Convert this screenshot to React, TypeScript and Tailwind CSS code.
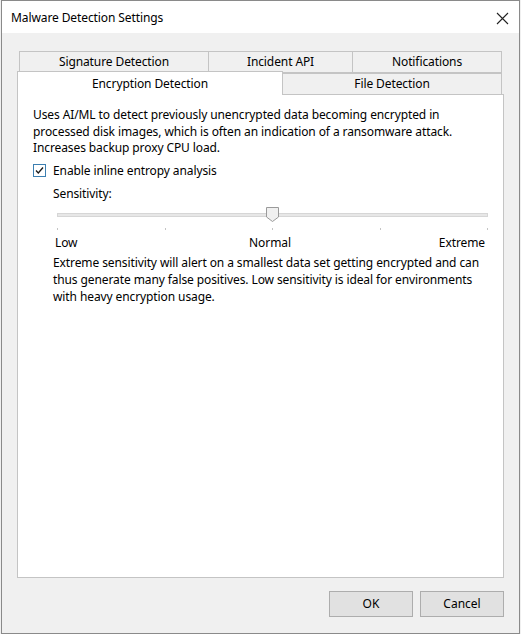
import React from "react"

const font = { fontFamily: '"Noto Sans", "Open Sans", sans-serif' }

function Tab({ label, w, selected }: { label: string; w: string; selected?: boolean }) {
  return (
    <div
      className={`${w} flex items-center justify-center text-[12px] tracking-[-0.1px] text-black border border-[#c4c4c4] ${
        selected ? "bg-white border-b-0 h-[24px] relative z-10" : "bg-[#f0f0f0] h-[22px]"
      }`}
    >
      {label}
    </div>
  )
}

export default function App() {
  const ticks = [0, 1, 2, 3, 4]
  return (
    <div className="w-[521px] h-[634px] bg-[#f0f0f0]" style={font}>
      <div className="w-[519px] h-[634px] ml-[1px] border border-[#8a8a8a] flex flex-col bg-[#f0f0f0]">
        {/* title bar */}
        <div className="h-[32px] bg-white flex items-center justify-between pl-[9px] pr-[9px] pt-[2px] shrink-0">
          <span className="text-[12px] tracking-[-0.1px] text-black">Malware Detection Settings</span>
          <svg width="13" height="13" viewBox="0 0 13 13" className="mr-[1px]">
            <path d="M1 1 L12 12 M12 1 L1 12" stroke="#222" strokeWidth="1.1" />
          </svg>
        </div>

        {/* tabs */}
        <div className="pl-[15px] pt-[18px] w-[502px]">
          <div className="flex ml-[2px]">
            <Tab label="Signature Detection" w="w-[190px]" />
            <Tab label="Incident API" w="w-[145px] -ml-[1px]" />
            <Tab label="Notifications" w="w-[150px] -ml-[1px]" />
          </div>
          <div className="flex items-end -mt-[2px]">
            <Tab label="Encryption Detection" w="w-[266px]" selected />
            <Tab label="File Detection" w="w-[220px] -ml-[1px]" />
          </div>

          {/* panel */}
          <div className="w-[487px] h-[484px] -mt-[1px] bg-white border border-[#c4c4c4] px-[15px] pt-[12px] text-[12px] tracking-[-0.1px] text-black">
            <p className="leading-[16.5px]">
              Uses AI/ML to detect previously unencrypted data becoming encrypted in processed disk images, which is
              often an indication of a ransomware attack. Increases backup proxy CPU load.
            </p>
            <div className="flex items-center mt-[6px] h-[16px]">
              <div className="w-[13px] h-[13px] border border-[#3c7fb1] flex items-center justify-center bg-white">
                <svg width="11" height="11" viewBox="0 0 11 11">
                  <path d="M2 5.5 L4.3 8 L9 2.5" fill="none" stroke="#1a1a1a" strokeWidth="1.3" />
                </svg>
              </div>
              <span className="ml-[7px]">Enable inline entropy analysis</span>
            </div>
            <div className="ml-[20px] mt-[7px] h-[16px] leading-[16px]">Sensitivity:</div>

            {/* slider */}
            <div className="ml-[24px] w-[431px] h-[29px] relative mt-[3px]">
              <div className="absolute left-0 right-0 top-[8px] h-[4px] bg-[#e7e7e7] border border-[#d6d6d6]" />
              <svg className="absolute left-[209px] top-[2px]" width="13" height="15" viewBox="0 0 13 15">
                <path d="M0.5 0.5 H12.5 V10 L6.5 14.5 L0.5 10 Z" fill="#f0f0f0" stroke="#9a9a9a" />
              </svg>
              <div className="absolute left-0 right-0 top-[23px] flex justify-between">
                {ticks.map(t => (
                  <div key={t} className="w-[1px] h-[2px] bg-[#c4c4c4]" />
                ))}
              </div>
            </div>
            <div className="ml-[22px] w-[430px] h-[16px] leading-[16px] mt-[1px] grid grid-cols-3">
              <span className="text-left">Low</span>
              <span className="text-center">Normal</span>
              <span className="text-right">Extreme</span>
            </div>
            <p className="ml-[20px] mt-[3px] leading-[17px]">
              Extreme sensitivity will alert on a smallest data set getting encrypted and can thus generate many false
              positives. Low sensitivity is ideal for environments with heavy encryption usage.
            </p>
          </div>
        </div>

        {/* buttons */}
        <div className="flex justify-end gap-[7px] pr-[15px] mt-[13px]">
          <button className="w-[84px] h-[26px] bg-[#e1e1e1] border border-[#adadad] text-[12px] text-black">OK</button>
          <button className="w-[84px] h-[26px] bg-[#e1e1e1] border border-[#adadad] text-[12px] text-black">Cancel</button>
        </div>
      </div>
    </div>
  )
}
